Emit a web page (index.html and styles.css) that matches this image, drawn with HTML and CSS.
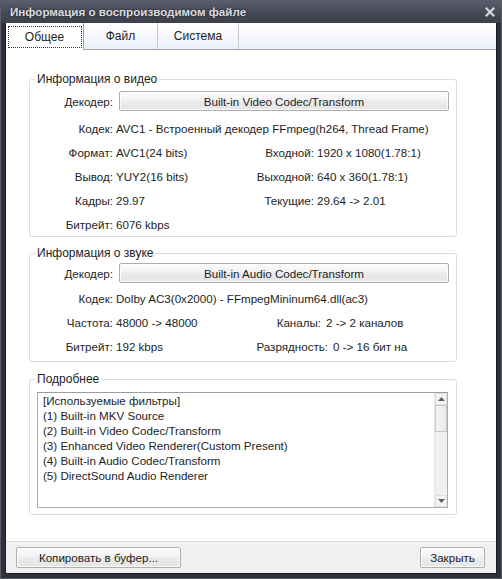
FILE: index.html
```html
<!DOCTYPE html>
<html lang="ru">
<head>
<meta charset="utf-8">
<title>Информация о воспроизводимом файле</title>
<link rel="stylesheet" href="styles.css">
</head>
<body>
<div class="window">
  <div class="titlebar">
    <span class="title">Информация о воспроизводимом файле</span>
    <svg class="close" width="10" height="10" viewBox="0 0 10 10"><path d="M1.5 1.5 L8.5 8.5 M8.5 1.5 L1.5 8.5" stroke="#d6d7dc" stroke-width="2.2" stroke-linecap="square"/></svg>
  </div>
  <div class="client">
    <div class="tabs">
      <div class="tab active"><span class="focus">Общее</span></div>
      <div class="tab">Файл</div>
      <div class="tab">Система</div>
    </div>
    <div class="page">
      <fieldset class="group video">
        <legend>Информация о видео</legend>
        <div class="decoder">
          <span class="l1">Декодер:</span>
          <button class="btn wide">Built-in Video Codec/Transform</button>
        </div>
        <div class="rows">
          <div class="row"><span class="l1">Кодек:</span><span class="full">AVC1 - Встроенный декодер FFmpeg(h264, Thread Frame)</span></div>
          <div class="row"><span class="l1">Формат:</span><span class="v1">AVC1(24 bits)</span><span class="l2">Входной:</span><span class="v2">1920 x 1080(1.78:1)</span></div>
          <div class="row"><span class="l1">Вывод:</span><span class="v1">YUY2(16 bits)</span><span class="l2">Выходной:</span><span class="v2">640 x 360(1.78:1)</span></div>
          <div class="row"><span class="l1">Кадры:</span><span class="v1">29.97</span><span class="l2">Текущие:</span><span class="v2">29.64 -&gt; 2.01</span></div>
          <div class="row"><span class="l1">Битрейт:</span><span class="v1">6076 kbps</span></div>
        </div>
      </fieldset>
      <fieldset class="group audio">
        <legend>Информация о звуке</legend>
        <div class="decoder">
          <span class="l1">Декодер:</span>
          <button class="btn wide">Built-in Audio Codec/Transform</button>
        </div>
        <div class="rows">
          <div class="row"><span class="l1">Кодек:</span><span class="full">Dolby AC3(0x2000) - FFmpegMininum64.dll(ac3)</span></div>
          <div class="row"><span class="l1">Частота:</span><span class="v1">48000 -&gt; 48000</span><span class="l2 la">Каналы:</span><span class="v2 va">2 -&gt; 2 каналов</span></div>
          <div class="row"><span class="l1">Битрейт:</span><span class="v1">192 kbps</span><span class="l2 la lb">Разрядность:</span><span class="v2 va">0 -&gt; 16 бит на</span></div>
        </div>
      </fieldset>
      <fieldset class="group details">
        <legend>Подробнее</legend>
        <div class="textbox">
          <div class="text">[Используемые фильтры]<br>(1) Built-in MKV Source<br>(2) Built-in Video Codec/Transform<br>(3) Enhanced Video Renderer(Custom Present)<br>(4) Built-in Audio Codec/Transform<br>(5) DirectSound Audio Renderer</div>
          <div class="scrollbar">
            <div class="arrow up"><svg width="7" height="4" viewBox="0 0 7 4"><path d="M0 4 L3.5 0 L7 4 Z" fill="#606060"/></svg></div>
            <div class="thumb"></div>
            <div class="track"></div>
            <div class="arrow down"><svg width="7" height="4" viewBox="0 0 7 4"><path d="M0 0 L7 0 L3.5 4 Z" fill="#606060"/></svg></div>
          </div>
        </div>
      </fieldset>
    </div>
    <div class="footer">
      <button class="btn copy">Копировать в буфер...</button>
      <button class="btn closebtn">Закрыть</button>
    </div>
  </div>
</div>
</body>
</html>
```

FILE: styles.css
```css
* { box-sizing: border-box; }

body {
  margin: 0;
  width: 502px;
  height: 579px;
  overflow: hidden;
  background: #2f3139;
  font-family: "Liberation Sans", Arial, sans-serif;
  font-size: 11.6px;
  color: #1e1e1e;
}

.window {
  display: flex;
  flex-direction: column;
  height: 579px;
  border-left: 1px solid #5a5c66;
  border-right: 1px solid #5a5c66;
  border-bottom: 1px solid #5a5c66;
}

.titlebar {
  height: 23px;
  flex: none;
  display: flex;
  align-items: center;
  justify-content: space-between;
  padding: 0 6px 0 9px;
  background: linear-gradient(#5b5e6c, #454855 60%, #3e404c);
}

.title {
  font-weight: bold;
  font-size: 11.6px;
  color: #d9d9de;
  text-shadow: 0 0 3px rgba(0,0,0,0.5);
}

.close { margin-top: 1px; }

.client {
  flex: 1;
  margin: 0 4px 4px 4px;
  display: flex;
  flex-direction: column;
  background: #fff;
  border: 1px solid #1c1d22;
  border-top: none;
}

.tabs {
  height: 27px;
  flex: none;
  display: flex;
  background: linear-gradient(#ffffff, #eceff9);
  border-bottom: 1px solid #a5a7ae;
}

.tab {
  width: 74px;
  height: 26px;
  display: flex;
  align-items: center;
  justify-content: center;
  border-right: 1px solid #c6c8cf;
  color: #1e1e1e;
  font-size: 12px;
}

.tab:nth-child(3) { width: 81px; }

.tab.active {
  width: 78px;
  height: 27px;
  background: #fff;
  border-right: 1px solid #9fa1a8;
  margin-bottom: -1px;
}

.focus {
  width: 74px;
  height: 22px;
  margin-top: 1px;
  border: 1px dotted #333;
  display: flex;
  align-items: center;
  justify-content: center;
}

.page {
  flex: 1;
  padding: 21px 0 0 23px;
}

.group {
  width: 428px;
  margin: 0;
  padding: 0;
  border: 1px solid #d6dde3;
  border-radius: 3px;
  min-width: 0;
}

.group legend {
  margin-left: 5px;
  padding: 0 2px;
  line-height: 16px;
  font-size: 12px;
  color: #1e1e1e;
}

.audio { margin-top: 8px; }
.details { margin-top: 9px; }

.decoder {
  display: flex;
  align-items: center;
  height: 20px;
  margin-top: 4px;
}

.audio .decoder { margin-top: 2px; }

.l1 {
  width: 83px;
  text-align: right;
  flex: none;
}

.btn {
  font-family: inherit;
  font-size: 11.6px;
  color: #1e1e1e;
  height: 20px;
  padding: 0;
  border: 1px solid #adadad;
  border-radius: 2px;
  background: linear-gradient(#fbfbfb, #f3f3f3 45%, #eaeaea 55%, #e5e5e5);
  box-shadow: inset 0 0 0 1px rgba(255,255,255,0.85);
}

.btn.wide {
  width: 330px;
  margin-left: 6px;
}

.rows {
  margin-top: 5px;
  padding-bottom: 0;
}

.audio .rows { margin-top: 3px; padding-bottom: 3px; }

.row {
  display: flex;
  height: 24px;
  align-items: center;
  white-space: nowrap;
}

.full, .v1 { margin-left: 3px; }

.v1 { width: 128px; flex: none; }

.l2 {
  width: 70px;
  flex: none;
  text-align: right;
}

.v2 { margin-left: 3px; }

.l2.la { width: 77px; }
.l2.lb { width: 84px; }
.v2.va { margin-left: 5px; }

.textbox {
  display: flex;
  height: 116px;
  margin: 5px 8px 6px 7px;
  border: 1px solid #abadb3;
  border-top-color: #9b9da3;
}

.text {
  flex: 1;
  padding: 0 0 0 5px;
  line-height: 15.1px;
}

.scrollbar {
  width: 13px;
  display: flex;
  flex-direction: column;
  background: #f0f0f0;
  border-left: 1px solid #e4e4e4;
}

.arrow {
  height: 12px;
  display: flex;
  align-items: center;
  justify-content: center;
  border: 1px solid #e0e0e0;
  background: #f4f4f4;
}

.thumb {
  height: 27px;
  border: 1px solid #c9c9c9;
  background: linear-gradient(90deg, #f6f6f6, #e9e9e9);
}

.track { flex: 1; }

.footer {
  height: 32px;
  flex: none;
  display: flex;
  align-items: center;
  justify-content: space-between;
  padding: 0 11px 0 10px;
  background: #f0f0f0;
  border-top: 1px solid #dcdcdc;
}

.btn.copy { width: 165px; height: 21px; }
.btn.closebtn { width: 65px; height: 21px; }
```
